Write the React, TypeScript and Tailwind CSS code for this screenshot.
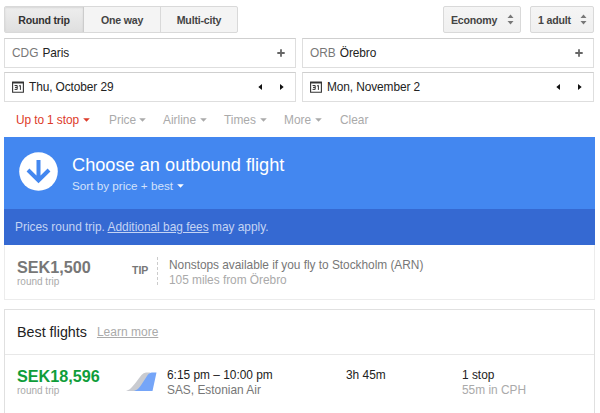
import type { ReactNode } from "react";

function Caret({ className = "" }: { className?: string }) {
  return (
    <svg width="7" height="4" viewBox="0 0 7 4" className={className} fill="currentColor">
      <path d="M0.200 0.300h6.600L3.500 3.700z" />
    </svg>
  );
}

function Select({ label, className }: { label: string; className: string }) {
  return (
    <button
      className={`flex h-[27px] items-center justify-between rounded-[2px] border border-[#d9d9d9] bg-linear-to-b from-[#f5f5f5] to-[#f0f0f0] pr-[6px] pl-[7px] font-bold text-[#444] ${className}`}
    >
      <span>{label}</span>
      <svg width="7" height="11" viewBox="0 0 7 11" fill="#777">
        <path d="M0.5 4h6L3.5 0.6zM0.5 7h6L3.5 10.4z" />
      </svg>
    </button>
  );
}

function Field({ children }: { children: ReactNode }) {
  return (
    <div className="flex h-[30px] flex-1 items-center border border-[#dedede] border-t-[#cfcfcf] bg-white pr-[10px] pl-[7px]">
      {children}
    </div>
  );
}

function Airport({ code, city }: { code: string; city: string }) {
  return (
    <Field>
      <span className="text-[11.9px] text-[#777]">{code}</span>
      <span className="ml-[4px] flex-1 text-[11.9px] tracking-[-0.1px] text-[#222]">{city}</span>
      <svg width="8" height="8" viewBox="0 0 8 8" stroke="#666" strokeWidth="1.8">
        <path d="M4 0.3v7.4M0.3 4h7.4" />
      </svg>
    </Field>
  );
}

function DateField({ date }: { date: string }) {
  return (
    <Field>
      <svg width="12" height="12" viewBox="0 0 12 12" fill="none" stroke="#333">
        <path d="M0.6 1.6h10.8v9.6H0.6z" strokeWidth="1.1" />
        <path d="M0.1 1.4h11.8" strokeWidth="1.8" />
        <path d="M2.600 4.5h2.600v3.900h-2.600M3 6.400h2.200M6.900 5.100l1.500-.7v4.500" strokeWidth="1" />
      </svg>
      <span className="ml-[5px] flex-1 text-[11.9px] tracking-[-0.1px] text-[#222]">{date}</span>
      <svg width="26" height="6" viewBox="0 0 26 6" fill="#111" className="mr-px">
        <path d="M4 0v6L0.300 3zM22 0v6L25.700 3z" />
      </svg>
    </Field>
  );
}

function Filter({ label, className }: { label: string; className: string }) {
  return (
    <div className={`flex items-center ${className}`}>
      <span className="flex-1">{label}</span>
      <Caret />
    </div>
  );
}

export default function App() {
  return (
    <div className="h-[413px] w-[600px] overflow-hidden bg-white pt-[6px] pr-[5px] pl-[4px] font-['Liberation_Sans',Arial,sans-serif] text-[12px] leading-[14px] whitespace-nowrap">
      <div className="flex h-[27px] justify-between pr-px text-[10.6px] tracking-[-0.2px]">
        <div className="flex overflow-hidden rounded-[2px] border border-[#d9d9d9] bg-[#f4f4f4] font-bold text-[#444]">
          <button className="w-[79px] border-r border-[#ccc] bg-linear-to-b from-[#eee] to-[#dfdfdf] text-[#333] shadow-[inset_0_1px_2px_rgba(0,0,0,0.1)]">Round trip</button>
          <button className="w-[77px] border-r border-[#d9d9d9]">One way</button>
          <button className="w-[76px]">Multi-city</button>
        </div>
        <div className="flex gap-[9px]">
          <Select label="Economy" className="w-[78px]" />
          <Select label="1 adult" className="w-[64px]" />
        </div>
      </div>

      <div className="mt-[5px] flex gap-[6px] pr-px">
        <Airport code="CDG" city="Paris" />
        <Airport code="ORB" city="Örebro" />
      </div>
      <div className="mt-[4px] flex gap-[6px] pr-px">
        <DateField date="Thu, October 29" />
        <DateField date="Mon, November 2" />
      </div>

      <div className="flex h-[35px] items-center pl-[12px] text-[11.9px] text-[#aaa]">
        <Filter label="Up to 1 stop" className="w-[74px] tracking-[-0.1px] text-[#dd3b29]" />
        <Filter label="Price" className="ml-[19px] w-[37px]" />
        <Filter label="Airline" className="ml-[17px] w-[44px]" />
        <Filter label="Times" className="ml-[17px] w-[43px]" />
        <Filter label="More" className="ml-[17px] w-[38px]" />
        <span className="ml-[18px]">Clear</span>
      </div>

      <div className="flex h-[72px] items-center bg-[#4387f0] pl-[15px] text-white">
        <svg width="39" height="39" viewBox="0 0 39 39" className="mt-[-3px]">
          <circle cx="19.5" cy="19.5" r="19.3" fill="#fff" />
          <path d="M19.5 8v20M9 18l10.500 10.500L30 18" fill="none" stroke="#4387f0" strokeWidth="4" />
        </svg>
        <div className="ml-[14px]">
          <div className="text-[18.2px] leading-[22px]">Choose an outbound flight</div>
          <div className="mt-[3px] flex items-center text-[11.7px] text-[#d3e2fb]">
            Sort by price + best
            <Caret className="ml-[4px] text-white" />
          </div>
        </div>
      </div>
      <div className="flex h-[36px] items-center bg-[#3569d2] pl-[11px] text-[11.9px] text-[#c4d4f4]">
        <span>
          Prices round trip. <a className="underline underline-offset-1">Additional bag fees</a> may apply.
        </span>
      </div>

      <div className="flex h-[55px] border border-t-0 border-[#ececec] pt-[14px] pl-[12px]">
        <div className="w-[115px]">
          <div className="text-[16.2px] leading-[17px] font-bold text-[#777]">SEK1,500</div>
          <div className="text-[10px] leading-[12px] text-[#aaa]">round trip</div>
        </div>
        <div className="w-[25px] pt-[4px] text-[10.5px] font-bold text-[#777]">TIP</div>
        <div className="mt-[-2px] h-[28px] border-l border-dashed border-[#ccc] pl-[11px]" />
        <div className="-mt-px text-[11.9px] leading-[15px] tracking-[-0.03px]">
          <div className="text-[#777]">Nonstops available if you fly to Stockholm (ARN)</div>
          <div className="text-[#aaa]">105 miles from Örebro</div>
        </div>
      </div>

      <div className="mt-[9px] h-[120px] border border-[#e0e0e0]">
        <div className="flex h-[45px] items-center border-b border-[#e8e8e8] pl-[12px]">
          <span className="text-[14.3px] text-[#222]">Best flights</span>
          <a className="ml-[10px] text-[12px] text-[#aaa] underline underline-offset-1">Learn more</a>
        </div>
        <div className="flex pt-[13px] pl-[12px]">
          <div className="w-[109px]">
            <div className="text-[16.2px] leading-[17px] font-bold text-[#0f9d3a]">SEK18,596</div>
            <div className="text-[10px] leading-[12px] text-[#aaa]">round trip</div>
          </div>
          <svg width="31" height="20" viewBox="0 0 31 20" className="mt-[4px]">
            <path d="M0 19C5 17.500 7 14 15.500 3Q17.500 .5 20 .5H24L20 19z" fill="#c9cbd0" />
            <path d="M8 19C13 17.500 14.500 14 21 4Q23 .5 26 .5H30.500L26.500 19z" fill="#75a5f8" />
          </svg>
          <div className="ml-[10px] w-[179px] text-[11.9px] leading-[15px]">
            <div className="text-[#222]">6:15 pm – 10:00 pm</div>
            <div className="text-[#777]">SAS, Estonian Air</div>
          </div>
          <div className="w-[116px] text-[11.9px] leading-[15px] text-[#222]">3h 45m</div>
          <div className="text-[11.9px] leading-[15px]">
            <div className="text-[#222]">1 stop</div>
            <div className="text-[#aaa]">55m in CPH</div>
          </div>
        </div>
      </div>
    </div>
  );
}
